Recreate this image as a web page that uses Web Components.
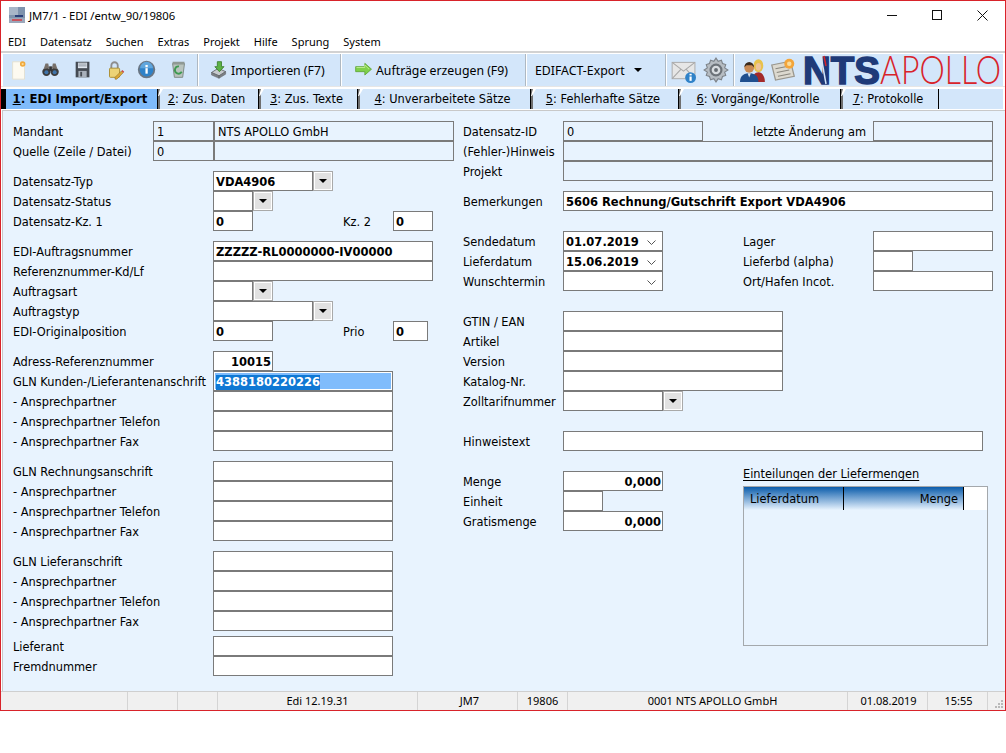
<!DOCTYPE html>
<html lang="de">
<head>
<meta charset="utf-8">
<title>JM7/1 - EDI</title>
<style>
  html, body { margin: 0; background: #fff; }
</style>
</head>
<body>
<edi-window>
  <title-bar text="JM7/1 - EDI /entw_90/19806"></title-bar>
  <menu-bar items="EDI,Datensatz,Suchen,Extras,Projekt,Hilfe,Sprung,System"></menu-bar>
  <tool-bar></tool-bar>
  <tab-strip></tab-strip>
  <edi-form></edi-form>
  <status-bar></status-bar>
</edi-window>

<script>
const UI_FONT = `"Noto Sans", "Open Sans", sans-serif`;
const FORM_FONT = `"DejaVu Sans", sans-serif`;

class EdiWindow extends HTMLElement {
  constructor() {
    super();
    this.attachShadow({ mode: "open" });
    this.shadowRoot.innerHTML = `
      <style>
        :host { display: flex; flex-direction: column; box-sizing: border-box; width: 1006px; height: 711px;
          border: 1px solid #d8232a; background: #fff; }
      </style>
      <slot></slot>`;
  }
}

class TitleBar extends HTMLElement {
  constructor() {
    super();
    this.attachShadow({ mode: "open" });
    this.shadowRoot.innerHTML = `
      <style>
        :host { display: flex; align-items: center; box-sizing: border-box; height: 30px; flex: none;
          padding: 0 0 2px 8px; font: 11.300px ${UI_FONT}; color: #000; }
        .logo { width: 16px; height: 16px; margin-right: 4px; }
        .text { flex: 1; }
        .btn { width: 45px; height: 28px; display: flex; align-items: center; justify-content: center; }
      </style>
      <svg class="logo" viewBox="0 0 16 16">
        <rect width="16" height="16" fill="#7f93ad"/>
        <rect x="0" y="0" width="9" height="8" fill="#a8b6c8"/>
        <rect x="0" y="11" width="16" height="5" fill="#9aa7ba"/>
        <rect x="6" y="8" width="8" height="2" fill="#2b3f78"/>
        <rect x="3" y="12" width="10" height="2" fill="#c9545e"/>
      </svg>
      <span class="text">${this.getAttribute("text")}</span>
      <span class="btn"><svg width="11" height="11"><path d="M0 5.500h10" stroke="#111" fill="none"/></svg></span>
      <span class="btn"><svg width="11" height="11"><rect x=".5" y=".5" width="9" height="9" stroke="#111" fill="none"/></svg></span>
      <span class="btn"><svg width="11" height="11"><path d="M.5.500l10 10M10.500.5l-10 10" stroke="#111" fill="none"/></svg></span>`;
  }
}

class MenuBar extends HTMLElement {
  constructor() {
    super();
    this.attachShadow({ mode: "open" });
    const items = this.getAttribute("items").split(",").map((m) => `<span>${m}</span>`).join("");
    this.shadowRoot.innerHTML = `
      <style>
        :host { display: flex; gap: 14px; align-items: center; height: 20px; flex: none; padding-left: 7px;
          font: 11px ${UI_FONT}; color: #000; }
      </style>${items}`;
  }
}

const ICONS = {
  doc: `<path d="M5 3h10l3 3v16H5z" fill="#fdfaf0" stroke="#e2dfd0"/><circle cx="16" cy="5.500" r="3" fill="#f1a93b"/><circle cx="16" cy="5.500" r="1.200" fill="#fbdc9a"/>`,
  binoc: `<circle cx="7" cy="14" r="4.500" fill="#3c3c3c"/><circle cx="16" cy="14" r="4.500" fill="#3c3c3c"/><path d="M4 11l2-6h3l1 5zM19 11l-2-6h-3l-1 5z" fill="#77706a"/><rect x="10" y="8" width="3" height="5" fill="#333"/><circle cx="7" cy="14.500" r="2.200" fill="#3f74aa"/><circle cx="16" cy="14.500" r="2.200" fill="#3f74aa"/>`,
  disk: `<rect x="4" y="3" width="15" height="17" fill="#454b53"/><rect x="6.500" y="4" width="10" height="6" fill="#dfe6ee"/><path d="M7 5.500h9M7 7.500h9" stroke="#8a9099"/><rect x="7" y="13" width="9" height="7" fill="#a8b0ba"/><rect x="9" y="14" width="2" height="5" fill="#454b53"/>`,
  lock: `<path d="M8 10V7a3.500 3.500 0 0 1 7 0v3" fill="none" stroke="#8d8d8d" stroke-width="2"/><rect x="6" y="10" width="11" height="10" rx="1" fill="#ecd376" stroke="#a98b2c"/><path d="M12 20l7-7 2 2-7 7h-2z" fill="#d9a636" stroke="#7d6420" stroke-width=".5"/><path d="M19 13l2 2 1-1-2-2z" fill="#cf3f3f"/>`,
  info: `<circle cx="11.500" cy="11.500" r="8.500" fill="#2f82c8" stroke="#6a7684" stroke-width="2"/><path d="M4.500 10a7 7 0 0 1 14 0z" fill="#5fa6de"/><rect x="10.300" y="10" width="2.500" height="6" fill="#fff"/><rect x="10.300" y="6.500" width="2.500" height="2.500" fill="#fff"/>`,
  trash: `<path d="M5 5h13l-2 15H7z" fill="#b9c3bd" stroke="#7b8580"/><rect x="5" y="3" width="13" height="3" fill="#8f9994"/><path d="M12 8a4 4 0 1 0 3 6" fill="none" stroke="#3f9a52" stroke-width="2"/>`,
  import: `<path d="M3 15l8-5 9 4-8 5z" fill="#c6cacd" stroke="#5a5e62"/><path d="M3 15v3l9 4v-3zM12 19v3l8-5v-3z" fill="#7c8084" stroke="#54585c" stroke-width=".5"/><path d="M10 2h5v6h3l-5.500 6L7 8h3z" fill="#5cb246" stroke="#3a7d2b"/>`,
  arrow: `<path d="M2 8h11V4l8 7-8 7v-4H2z" fill="#7fd04b" stroke="#5ea536"/><path d="M3 9h10V6l5 5" fill="none" stroke="#c6ef97"/>`,
  mail: `<rect x="2" y="5" width="21" height="15" fill="#e6e6e6" stroke="#b0b0b0"/><path d="M2 5l10.500 8L23 5M2 20l8-8.500M23 20l-8-8.500" fill="none" stroke="#a8a8a8"/><circle cx="19" cy="19" r="5" fill="#2f82c8"/><rect x="18" y="18" width="2" height="4" fill="#fff"/><rect x="18" y="15.500" width="2" height="1.500" fill="#fff"/>`,
  gear: `<path d="M12 1l2 3 3-1 1 3 3 1-1 3 3 2-3 2 1 3-3 1-1 3-3-1-2 3-2-3-3 1-1-3-3-1 1-3-3-2 3-2-1-3 3-1 1-3 3 1z" fill="#b6bcc2" stroke="#7d8389"/><circle cx="12" cy="12" r="5" fill="#d8dce0" stroke="#6d7379" stroke-width="2"/><circle cx="12" cy="12" r="1.800" fill="#656b71"/>`,
  users: `<ellipse cx="17" cy="8" rx="4.500" ry="6" fill="#e8c24d"/><ellipse cx="17" cy="9" rx="2.500" ry="3.500" fill="#eec49a"/><path d="M11 23c0-6 3-9 6-9s6 3 6 9z" fill="#a32a2a"/><circle cx="8.500" cy="10" r="4.500" fill="#c98a54"/><path d="M4 9.500a4.500 5 0 0 1 9 0l-2-2H6z" fill="#3b2a1c"/><path d="M0 23c0-6 4-8 8.500-8s8.500 2 8.500 8z" fill="#1f4f8f"/><path d="M7 15h3l-1.500 4z" fill="#dfe6ee"/>`,
  news: `<path d="M3 8l15-3 3 12-15 3z" fill="#dcd9cf" stroke="#9a978e"/><path d="M6 11l10-2M7 14l10-2M8 17l10-2" stroke="#8a877e"/><circle cx="17" cy="7" r="4" fill="#f3a53a"/><circle cx="17" cy="7" r="1.800" fill="#fbdc9a"/>`
};
const icon = (name, size = 24) => `<svg width="${size}" height="${size}" viewBox="0 0 24 24">${ICONS[name]}</svg>`;

class ToolBar extends HTMLElement {
  constructor() {
    super();
    this.attachShadow({ mode: "open" });
    const first = ["doc", "binoc", "disk", "lock", "info", "trash"].map((n) => `<span class="i">${icon(n, 22)}</span>`).join("");
    this.shadowRoot.innerHTML = `
      <style>
        :host { display: block; flex: none; border-top: 2px solid #d2d2d2; border-bottom: 1px solid #e6e6e6;
          padding: 1px 2px 0; margin-bottom: 2px; font: 12.300px ${UI_FONT}; color: #000; }
        .bar { display: flex; height: 32px; }
        .grp { display: flex; align-items: center; flex: none; box-sizing: border-box; background: #d3e6fa;
          border-right: 1px solid #aeb8c2; margin-right: 1px; white-space: nowrap; }
        .g1 { width: 195px; }
        .i { width: 32px; display: flex; justify-content: center; }
        .g2 { width: 142px; padding-left: 10px; gap: 2px; }
        .g3 { width: 184px; padding-left: 12px; gap: 2px; }
        .g4 { width: 139px; padding-left: 8px; gap: 9px; }
        .g5 { width: 67px; padding-left: 3px; gap: 7px; }
        .g6 { flex: 1; border: 0; margin: 0; padding-left: 5px; gap: 2px; }
        .caret { width: 0; height: 0; border: 4px solid transparent; border-top: 4px solid #000; border-bottom: 0; }
        .logo { margin-left: 3px; display: block; overflow: visible; }
      </style>
      <div class="bar">
        <div class="grp g1">${first}</div>
        <div class="grp g2">${icon("import", 20)}<span>Importieren (F7)</span></div>
        <div class="grp g3">${icon("arrow", 20)}<span>Aufträge erzeugen (F9)</span></div>
        <div class="grp g4"><span>EDIFACT-Export</span><i class="caret"></i></div>
        <div class="grp g5">${icon("mail", 26)}${icon("gear", 26)}</div>
        <div class="grp g6">${icon("users", 26)}${icon("news", 30)}
          <svg class="logo" width="198" height="32" viewBox="0 0 198 32">
            <text x="0" y="30" font-family="Liberation Sans" font-weight="700" font-size="39" fill="#1f3a78" stroke="#1f3a78" stroke-width="1.500" textLength="77" lengthAdjust="spacingAndGlyphs">NTS</text>
            <path d="M18 2l5 28" stroke="#d3e6fa" stroke-width="1.500" fill="none"/>
            <path d="M21 2l2 10" stroke="#d8232a" stroke-width="1.500" fill="none"/>
            <text transform="translate(77 30) scale(.82 1)" font-family="Lato" font-weight="300" font-size="39" fill="#d8232a">APOLLO</text>
          </svg>
        </div>
      </div>`;
  }
}

class TabStrip extends HTMLElement {
  constructor() {
    super();
    this.attachShadow({ mode: "open" });
    const tabs = [
      ["1", ": EDI Import/Export", 156], ["2", ": Zus. Daten", 101], ["3", ": Zus. Texte", 99],
      ["4", ": Unverarbeitete Sätze", 173], ["5", ": Fehlerhafte Sätze", 148],
      ["6", ": Vorgänge/Kontrolle", 162], ["7", ": Protokolle", 99]
    ];
    const html = tabs.map(([n, t, w], i) =>
      `<div class="tab ${i === 0 ? "on" : ""}" style="width:${w}px"><u>${n}</u>${t}</div>`).join("");
    this.shadowRoot.innerHTML = `
      <style>
        :host { display: flex; flex: none; height: 20px; margin-right: 2px; background: #d3e6fa;
          font: 11.400px ${FORM_FONT}; color: #000; }
        .tab { position: relative; box-sizing: border-box; height: 20px; line-height: 21px; text-align: center;
          border-left: 1px solid #000; padding: 0 5px 0 2px; white-space: nowrap; }
        .tab::before { content: ""; position: absolute; left: 0; top: 0; width: 2px; height: 20px; background: #6f6f6f; }
        .tab::after { content: ""; position: absolute; left: 0; top: 0; width: 5px; height: 7px; background: #fff;
          clip-path: polygon(100% 0, 40% 0, 0 100%, 20% 100%); }
        .tab.on { background: #7fbbfb; font: 700 11.700px/21px ${FORM_FONT}; border-left: 5px solid #000; padding: 0 3px 0 0; }
        .tab.on::before, .tab.on::after { display: none; }
        .tab:last-child { border-right: 1px solid #000; }
      </style>${html}`;
  }
}

class FormField extends HTMLElement {
  constructor() {
    super();
    this.attachShadow({ mode: "open" });
    const w = this.getAttribute("w") || 220;
    const v = this.getAttribute("v") || "";
    const kind = this.getAttribute("kind");
    const ro = this.hasAttribute("ro");
    const inner = this.hasAttribute("sel") ? `<mark>${v}</mark>` : v;
    const extra = kind === "combo"
      ? `<span class="cb"><i></i></span>`
      : kind === "date"
        ? `<svg class="dt" width="9" height="5"><path d="M.5.500l4 4 4-4" stroke="#555" fill="none"/></svg>`
        : "";
    this.shadowRoot.innerHTML = `
      <style>
        :host { display: inline-flex; flex: none; height: 20px; }
        .box { box-sizing: border-box; width: ${w}px; height: 20px; border: 1px solid #7a7a7a; background: ${ro ? "transparent" : "#fff"};
          font: ${ro ? "400 11.400px" : "700 11.500px"}/20px ${FORM_FONT}; color: #000; padding: 0 1px 0 ${ro ? 3 : 2}px;
          text-align: ${this.getAttribute("align") || "left"}; position: relative; overflow: hidden; white-space: nowrap; }
        :host([sel]) .box { background: #80bcfc; box-shadow: inset 0 0 0 1px #fff; }
        mark { background: #0f78d4; color: #fff; padding: 0; display: inline-block; line-height: 15px; }
        .cb { box-sizing: border-box; width: 20px; height: 20px; border: 1px solid #a9a9a9; background: #e1e1e1;
          box-shadow: inset 0 0 0 1px #fff; display: flex; align-items: center; justify-content: center; }
        .cb i { width: 0; height: 0; border: 4px solid transparent; border-top: 4px solid #000; border-bottom: 0; }
        .dt { position: absolute; right: 6px; top: 8px; }
      </style>
      <div class="box">${inner}${kind === "date" ? extra : ""}</div>${kind === "combo" ? extra : ""}`;
  }
}

class FormRow extends HTMLElement {
  constructor() {
    super();
    this.attachShadow({ mode: "open" });
    const lw = this.getAttribute("lw") || 200;
    this.shadowRoot.innerHTML = `
      <style>
        :host { display: flex; height: 20px; font: 11.400px/22px ${FORM_FONT}; color: #000; white-space: nowrap; }
        .l { width: ${lw}px; flex: none; height: 20px; }
      </style>
      <span class="l">${this.getAttribute("label") || ""}</span><slot></slot>`;
  }
}

class FormNote extends HTMLElement {
  constructor() {
    super();
    this.attachShadow({ mode: "open" });
    this.shadowRoot.innerHTML = `
      <style>:host { display: block; flex: none; width: ${this.getAttribute("w")}px; margin-left: ${this.getAttribute("ml") || 0}px;
        height: 20px; font: 11.400px/22px ${FORM_FONT}; color: #000; white-space: nowrap; }</style>
      <slot></slot>`;
  }
}

class QuantityGrid extends HTMLElement {
  constructor() {
    super();
    this.attachShadow({ mode: "open" });
    this.shadowRoot.innerHTML = `
      <style>
        :host { display: block; width: 245px; margin-top: -5px; font: 11.400px ${FORM_FONT}; color: #000; }
        .cap { height: 20px; line-height: 17px; }
        .cap u { text-underline-offset: 2px; }
        .tb { box-sizing: border-box; height: 160px; border: 1px solid #a4a8ac; }
        .hd { display: flex; height: 23px; line-height: 25px; background: #fff; }
        .a, .b { box-sizing: border-box; height: 23px; border-right: 1px solid #000;
          background: linear-gradient(#0b5cab, #e8f3fe); }
        .a { width: 100px; padding-left: 6px; }
        .b { width: 120px; text-align: right; padding-right: 5px; }
      </style>
      <div class="cap"><u>Einteilungen der Liefermengen</u></div>
      <div class="tb"><div class="hd"><div class="a">Lieferdatum</div><div class="b">Menge</div></div></div>`;
  }
}

const row = (label, fields = "", lw) => `<form-row label="${label}"${lw ? ` lw="${lw}"` : ""}>${fields}</form-row>`;
const tf = (attrs = "") => `<form-field ${attrs}></form-field>`;

class EdiForm extends HTMLElement {
  constructor() {
    super();
    this.attachShadow({ mode: "open" });
    const m = 100;
    this.shadowRoot.innerHTML = `
      <style>
        :host { display: flex; flex: 1; background: #e8f3fe; border: 1px solid #c8c8c8; border-width: 1px 0 0 1px;
          margin: 1px 0 0 1px; padding: 10px 0 0 10px; }
        .left { width: 450px; flex: none; }
        .mid { flex: 1; }
        .sec { margin-top: 10px; }
        .sec5 { margin-top: 5px; }
        .sec20 { margin-top: 20px; }
        .bottom { display: flex; }
      </style>
      <div class="left">
        ${row("Mandant", tf('ro w="61" v="1"') + tf('ro w="240" v="NTS APOLLO GmbH"'), 140)}
        ${row("Quelle (Zeile / Datei)", tf('ro w="61" v="0"') + tf('ro w="240"'), 140)}
        <div class="sec">
          ${row("Datensatz-Typ", tf('w="100" v="VDA4906" kind="combo"'))}
          ${row("Datensatz-Status", tf('w="40" kind="combo"'))}
          ${row("Datensatz-Kz. 1", tf('w="40" v="0"') + '<form-note ml="90" w="50">Kz. 2</form-note>' + tf('w="40" v="0"'))}
        </div>
        <div class="sec">
          ${row("EDI-Auftragsnummer", tf('v="ZZZZZ-RL0000000-IV00000"'))}
          ${row("Referenznummer-Kd/Lf", tf())}
          ${row("Auftragsart", tf('w="40" kind="combo"'))}
          ${row("Auftragstyp", tf('w="100" kind="combo"'))}
          ${row("EDI-Originalposition", tf('w="60" v="0"') + '<form-note ml="70" w="50">Prio</form-note>' + tf('w="35" v="0"'))}
        </div>
        <div class="sec">
          ${row("Adress-Referenznummer", tf('w="60" align="right" v="10015"'))}
          ${row("GLN Kunden-/Lieferantenanschrift", tf('w="180" sel v="4388180220226"'))}
          ${row("- Ansprechpartner", tf('w="180"'))}
          ${row("- Ansprechpartner Telefon", tf('w="180"'))}
          ${row("- Ansprechpartner Fax", tf('w="180"'))}
        </div>
        <div class="sec">
          ${row("GLN Rechnungsanschrift", tf('w="180"'))}
          ${row("- Ansprechpartner", tf('w="180"'))}
          ${row("- Ansprechpartner Telefon", tf('w="180"'))}
          ${row("- Ansprechpartner Fax", tf('w="180"'))}
        </div>
        <div class="sec">
          ${row("GLN Lieferanschrift", tf('w="180"'))}
          ${row("- Ansprechpartner", tf('w="180"'))}
          ${row("- Ansprechpartner Telefon", tf('w="180"'))}
          ${row("- Ansprechpartner Fax", tf('w="180"'))}
        </div>
        <div class="sec5">
          ${row("Lieferant", tf('w="180"'))}
          ${row("Fremdnummer", tf('w="180"'))}
        </div>
      </div>
      <div class="mid">
        ${row("Datensatz-ID", tf('ro w="140" v="0"') + '<form-note ml="50" w="120">letzte Änderung am</form-note>' + tf('ro w="120"'), m)}
        ${row("(Fehler-)Hinweis", tf('ro w="430"'), m)}
        ${row("Projekt", tf('ro w="430"'), m)}
        <div class="sec">
          ${row("Bemerkungen", tf('w="430" v="5606 Rechnung/Gutschrift Export VDA4906"'), m)}
        </div>
        <div class="sec sec20">
          ${row("Sendedatum", tf('w="100" v="01.07.2019" kind="date"') + '<form-note ml="80" w="130">Lager</form-note>' + tf('w="120"'), m)}
          ${row("Lieferdatum", tf('w="100" v="15.06.2019" kind="date"') + '<form-note ml="80" w="130">Lieferbd (alpha)</form-note>' + tf('w="40"'), m)}
          ${row("Wunschtermin", tf('w="100" kind="date"') + '<form-note ml="80" w="130">Ort/Hafen Incot.</form-note>' + tf('w="120"'), m)}
        </div>
        <div class="sec sec20">
          ${row("GTIN / EAN", tf('w="220"'), m)}
          ${row("Artikel", tf('w="220"'), m)}
          ${row("Version", tf('w="220"'), m)}
          ${row("Katalog-Nr.", tf('w="220"'), m)}
          ${row("Zolltarifnummer", tf('w="100" kind="combo"'), m)}
        </div>
        <div class="sec sec20">
          ${row("Hinweistext", tf('w="420"'), m)}
        </div>
        <div class="bottom sec20">
          <div style="width:280px">
            ${row("Menge", tf('w="100" align="right" v="0,000"'), m)}
            ${row("Einheit", tf('w="40"'), m)}
            ${row("Gratismenge", tf('w="100" align="right" v="0,000"'), m)}
          </div>
          <quantity-grid></quantity-grid>
        </div>
      </div>`;
  }
}

class StatusBar extends HTMLElement {
  constructor() {
    super();
    this.attachShadow({ mode: "open" });
    // last number is the extra left padding that nudges a text towards its spot in the cell
    const cells = [
      ["", 127, 0], ["", 50, 0], ["", 40, 0], ["Edi 12.19.31", 200, 0], ["JM7", 100, 4], ["19806", 50, 0],
      ["0001 NTS APOLLO GmbH", 280, 10], ["01.08.2019", 80, 2], ["15:55", 60, 2]
    ];
    this.shadowRoot.innerHTML = `
      <style>
        :host { display: flex; flex: none; height: 19px; background: #f0f0f0; border-top: 1px solid #cfcfcf;
          box-sizing: border-box; font: 11px/18px ${UI_FONT}; color: #000; }
        .c { box-sizing: border-box; flex: none; text-align: center; border-right: 1px solid #d4d4d4; }
        .grip { flex: 1; display: flex; justify-content: flex-end; align-items: flex-end; padding: 0 2px 2px 0; }
      </style>
      ${cells.map(([t, w, p]) => `<div class="c" style="width:${w}px;padding-left:${p}px">${t}</div>`).join("")}
      <div class="grip"><svg width="8" height="8" fill="#b9b9b9">
        <rect x="6" y="0" width="2" height="2"/><rect x="3" y="3" width="2" height="2"/><rect x="6" y="3" width="2" height="2"/>
        <rect x="0" y="6" width="2" height="2"/><rect x="3" y="6" width="2" height="2"/><rect x="6" y="6" width="2" height="2"/>
      </svg></div>`;
  }
}

customElements.define("edi-window", EdiWindow);
customElements.define("title-bar", TitleBar);
customElements.define("menu-bar", MenuBar);
customElements.define("tool-bar", ToolBar);
customElements.define("tab-strip", TabStrip);
customElements.define("form-field", FormField);
customElements.define("form-row", FormRow);
customElements.define("form-note", FormNote);
customElements.define("quantity-grid", QuantityGrid);
customElements.define("edi-form", EdiForm);
customElements.define("status-bar", StatusBar);
</script>
</body>
</html>
